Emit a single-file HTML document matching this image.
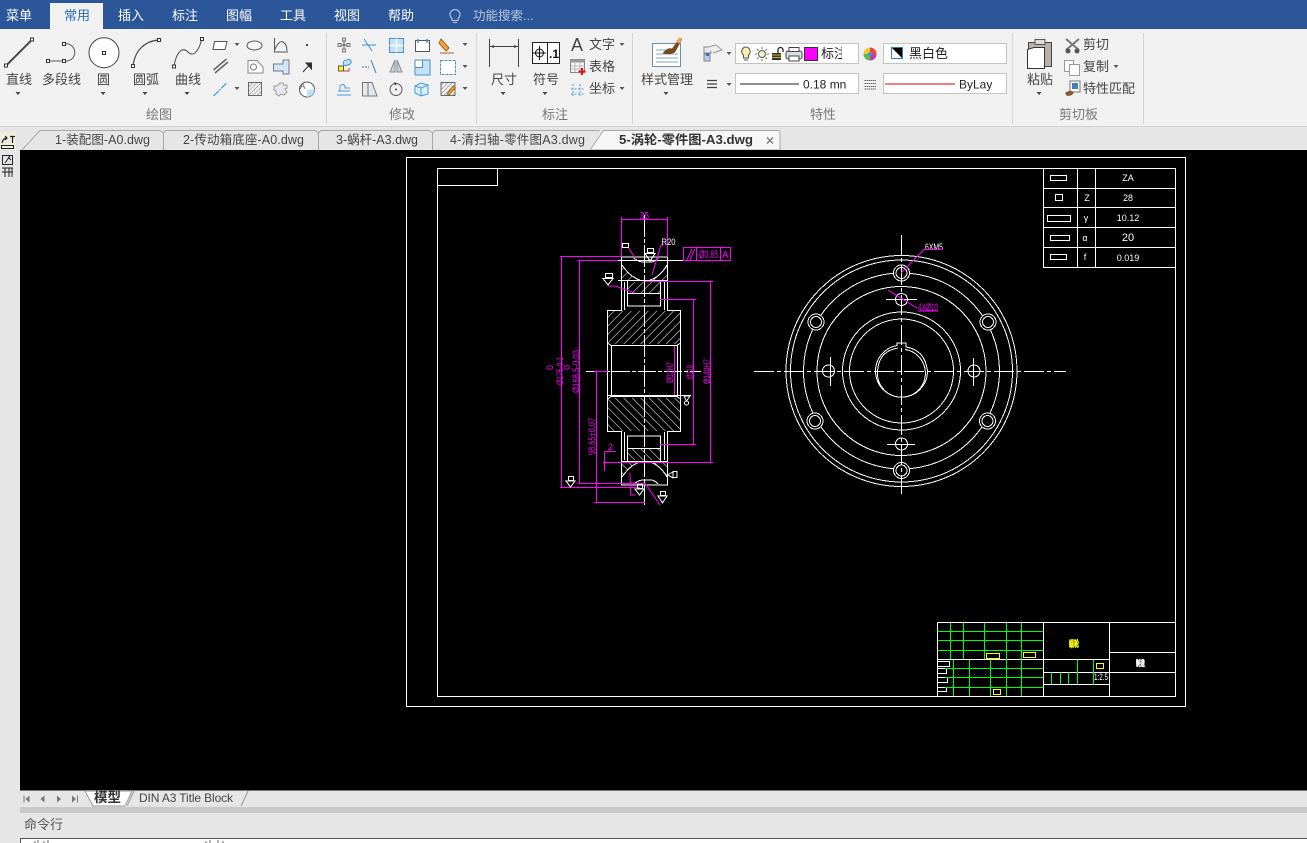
<!DOCTYPE html>
<html lang="zh"><head><meta charset="utf-8"><title>CAD</title>
<style>
html,body{margin:0;padding:0;background:#e6e6e6;width:1307px;height:843px;overflow:hidden}
svg{display:block;font-family:"Liberation Sans","Noto Sans CJK SC",sans-serif}
.m{font-size:13px;fill:#fff}
.l{font-size:13px;fill:#444}
.g{font-size:13px;fill:#777}
.tb{font-size:12.5px;fill:#444}
.i{fill:none;stroke:#555;stroke-width:1}
.b{fill:none;stroke:#4a9bd8;stroke-width:1}
.w{fill:none;stroke:#fff;stroke-width:1}
.p{fill:none;stroke:#f0f;stroke-width:1}
.gr{stroke:#0f0;stroke-width:1}
.y{fill:none;stroke:#ff0;stroke-width:1}
.cad{font-size:9px;fill:#fff}
.mg{font-size:9px;fill:#f0f}
</style></head><body>
<svg width="1307" height="843" viewBox="0 0 1307 843" xmlns="http://www.w3.org/2000/svg">
<defs>
<pattern id="h" width="6" height="6" patternUnits="userSpaceOnUse" patternTransform="rotate(45)"><path d="M0 0V6" stroke="#fff" stroke-width="1.1"/></pattern>
<pattern id="h2" width="3" height="3" patternUnits="userSpaceOnUse" patternTransform="rotate(45)"><path d="M0 0V3" stroke="#777" stroke-width="1"/></pattern>
<g id="half" class="w" shape-rendering="crispEdges">
<path d="M607.5 343V310.5H621.5V257H667.5V310.5H680.5V343L677 345.5H611L607.5 343"/>
<path d="M607.5 343V371M611.5 345V371M677.5 345V371M680.5 343V371"/>
<path d="M627.5 281V306H660.5V281M624.5 282V310M664.5 282V310M627.5 293.5H660.5M621.5 280.5H667.5"/>
<path d="M634 258Q638 262 644 262H650Q655 262 658 258"/>
<path d="M622 265Q630 277 640 280M667 265Q660 277 650 280"/>
</g>
<g id="half2">
<rect x="608" y="311" width="72" height="33" fill="url(#h)"/>
<path d="M622 265Q630 277 640 280H622ZM667 265Q660 277 650 280H667Z" fill="url(#h)"/>
<rect x="628" y="282" width="32" height="11" fill="url(#h)"/>
</g>
</defs>

<!-- backgrounds -->
<rect width="1307" height="843" fill="#e6e6e6"/>
<rect x="0" y="29" width="1307" height="98" fill="#f1f1f1"/>
<rect x="0" y="126" width="1307" height="1" fill="#d2d2d2"/>
<rect x="0" y="0" width="1307" height="29" fill="#2b579a"/>
<rect x="50" y="3" width="53" height="27" fill="#f1f1f1"/>

<!-- menu -->
<text class="m" x="6" y="20">菜单</text>
<text x="64" y="20" font-size="13" fill="#2b6cb5">常用</text>
<text class="m" x="118" y="20">插入</text>
<text class="m" x="172" y="20">标注</text>
<text class="m" x="226" y="20">图幅</text>
<text class="m" x="280" y="20">工具</text>
<text class="m" x="334" y="20">视图</text>
<text class="m" x="388" y="20">帮助</text>
<path d="M452 18.5a5 5 0 1 1 6 0v2h-6zM453 22.5h4" fill="none" stroke="#c5d0e2"/>
<text x="473" y="20" font-size="12.5" fill="#b9c6dc">功能搜索...</text>

<!-- separators -->
<g stroke="#d4d4d4" shape-rendering="crispEdges"><path d="M326.5 33V124M476.5 33V124M632.5 33V124M1012.5 33V124M1143.5 33V124"/></g>

<!-- draw group large icons -->
<path d="M6 65.7L32 39.7" stroke="#4a4a4a" stroke-width="2"/>
<g fill="#fff" stroke="#333" shape-rendering="crispEdges">
<rect x="4.5" y="64" width="3" height="3"/><rect x="30.5" y="38" width="3" height="3"/>
</g>
<path d="M48 61H64M64 43.7h3a8.7 8.7 0 0 1 0 17.3h-3" class="i"/>
<g fill="#fff" stroke="#333" shape-rendering="crispEdges">
<rect x="46.5" y="59.5" width="3" height="3"/><rect x="62.5" y="59.5" width="3" height="3"/><rect x="62.5" y="42.5" width="3" height="3"/>
</g>
<circle cx="104" cy="52.7" r="15" fill="#fff" stroke="#444"/>
<rect x="102.5" y="51.5" width="3" height="3" fill="#fff" stroke="#333" shape-rendering="crispEdges"/>
<path d="M133 66C135 50 145 41 159 40" fill="none" stroke="#444" stroke-width="1.2"/>
<g fill="#fff" stroke="#333" shape-rendering="crispEdges"><rect x="131.5" y="64.5" width="3" height="3"/><rect x="157.5" y="38.5" width="3" height="3"/></g>
<path d="M174 66C177 50 183 47 188 52S198 53 202 39" fill="none" stroke="#555" stroke-width="1.1"/>
<g fill="#fff" stroke="#333" shape-rendering="crispEdges"><rect x="172.5" y="65" width="3" height="3"/><rect x="200.5" y="37.5" width="3" height="3"/></g>

<text class="l" x="6" y="84">直线</text>
<text class="l" x="42" y="84">多段线</text>
<text class="l" x="97" y="84">圆</text>
<text class="l" x="133" y="84">圆弧</text>
<text class="l" x="175" y="84">曲线</text>
<g fill="#444">
<path d="M15.5 92h5l-2.500 3zM100.500 92h5l-2.500 3zM142.500 92h5l-2.500 3zM184.500 92h5l-2.500 3zM500.500 92h5l-2.500 3zM542.500 92h5l-2.500 3zM663.500 92h5l-2.500 3zM1036.500 92h5l-2.500 3z"/>
<path d="M234.500 43h5l-2.500 3zM234.500 87h5l-2.500 3zM462.500 43h5l-2.500 3zM462.500 65h5l-2.500 3zM462.500 87h5l-2.500 3zM619.500 43h5l-2.500 3zM619.500 87h5l-2.500 3zM726.500 52h5l-2.500 3zM726.500 83h5l-2.500 3zM849.500 52h5l-2.500 3zM849.500 83h5l-2.500 3zM996.500 52h5l-2.500 3zM996.500 83h5l-2.500 3zM1113.500 65h5l-2.500 3z" fill="#555"/>
</g>
<text class="g" x="146" y="119">绘图</text>
<text class="g" x="389" y="119">修改</text>
<text class="g" x="542" y="119">标注</text>
<text class="g" x="810" y="119">特性</text>
<text class="g" x="1059" y="119">剪切板</text>

<!-- draw small icons -->
<path d="M214.500 41.500H227L225 49.500H213Z" fill="#fff" stroke="#555"/>
<ellipse cx="254.500" cy="45.500" rx="7.500" ry="4.500" fill="#f4f4f4" stroke="#555"/>
<path d="M274.500 38V52H288M274.500 50Q279 40 283 42T287 51" class="i"/>
<rect x="306" y="44" width="2" height="2" fill="#444"/>
<path d="M213.500 70L226.500 59M215 73L228 62" fill="none" stroke="#666" stroke-width="1.500"/>
<path d="M248 60.500H257L263 67V73H248Z" fill="#fff" stroke="#888"/><circle cx="253.500" cy="67" r="3" fill="none" stroke="#777"/>
<path d="M273.500 64H283V60H289V74H283V71H273.500Z" fill="#d3e6f5" stroke="#778"/>
<path d="M303 72L311 63M306 63H311.500V69Z" fill="#222" stroke="#333"/>
<path d="M213.500 96L227 82.500" stroke="#3aa0e0" stroke-width="1.200" stroke-dasharray="7 1 2 1"/>
<rect x="248.500" y="82.500" width="13" height="13" fill="url(#h2)" stroke="#666"/>
<path d="M280 83l3 0 1 2 3 0 0 3-2 1 2 3-3 3-3-1-2 2-3-2 0-3-2-1 0-4 3 0z" fill="#e6e8ee" stroke="#999"/>
<circle cx="307" cy="89.500" r="7.500" fill="#fff" stroke="#555"/><path d="M307 89.500H314.500A7.500 7.500 0 0 1 307 97Z" fill="#bfe0f7"/>
<text x="300" y="89" font-size="8" fill="#555">A</text>

<!-- modify icons -->
<g class="i">
<path d="M344 39V51M338 45H350"/>
<path d="M362 45H376M364 39L372 51" stroke="#3a8fd0"/>
</g>
<g fill="#e4e4e4" stroke="#777"><rect x="342.500" y="38" width="3" height="3"/><rect x="342.500" y="49" width="3" height="3"/><rect x="338" y="43.500" width="3" height="3"/><rect x="347" y="43.500" width="3" height="3"/></g>
<rect x="389.500" y="38.500" width="14" height="14" fill="#c3e1f7" stroke="#4a8fc8"/><path d="M396.500 38.500V52.500M389.500 45.500H403.500" stroke="#fff" stroke-width="1.500"/>
<rect x="415.500" y="40.500" width="14" height="11" fill="#fff" stroke="#555"/><path d="M418 39v4M427 39v4" stroke="#3a8fd0" stroke-width="1.500"/>
<path d="M441 39l8 9-3 3-7-8zM440 53h14" fill="#f3a83c" stroke="#a0622a"/>
<rect x="338.500" y="66" width="5" height="5" fill="#ff0" stroke="#555"/><rect x="343" y="60" width="8" height="5" rx="2" fill="#bfe0f7" stroke="#4a8fc8" transform="rotate(-20 347 62)"/><path d="M344 71h5v-3" stroke="#c33" fill="none"/>
<path d="M362 67H369" stroke="#3a6fa0" stroke-dasharray="2 1"/><path d="M371 60L376 73" stroke="#2a7fc0"/>
<path d="M395 60L390 72H395ZM397 60L402 72H397Z" fill="#ccd5dd" stroke="#889"/>
<rect x="415" y="60" width="15" height="15" fill="#c3e1f7" stroke="#4a8fc8"/><rect x="415" y="60" width="7.500" height="7.500" fill="#fff" stroke="#4a8fc8"/>
<rect x="440.500" y="60.500" width="15" height="14" fill="#fff" stroke="#4a8fc8" stroke-dasharray="3 1"/>
<path d="M337 95H351M338 91H350M340 91V86Q343 83 345 86V88H350" class="b"/>
<path d="M362.500 82.500H372L377 96H362.500Z" fill="#dbeaf6" stroke="#777"/><path d="M362.500 82.500H368V96H362.500Z" fill="#e8e8e8" stroke="#777"/>
<circle cx="396" cy="89.500" r="6" class="i" stroke-width="1.500"/><circle cx="396" cy="89.500" r="1" fill="#444"/><path d="M394 82l3 1.500-2 2z" fill="#333"/>
<path d="M415 86L421 83L428 85V94L421 96L415 93Z" fill="#d8ecfa" stroke="#4a9bd8"/><path d="M421 88V96M415 86L421 88L428 85" class="b"/>
<rect x="441" y="82.500" width="14" height="13" fill="url(#h2)" stroke="#666"/><path d="M447 94l6-8 2 2-6 7z" fill="#f3a83c" stroke="#a0622a"/>

<!-- annotation -->
<path d="M489.500 39V67M518.500 39V67M489.500 46.500H518.500" stroke="#444" fill="none"/>
<path d="M490 46.500l4-1.500v3zM518 46.500l-4-1.500v3z" fill="#444"/>
<rect x="532.500" y="42.500" width="27" height="21" fill="#fff" stroke="#222"/><path d="M547.500 42.500V63.500" stroke="#222"/>
<circle cx="539.500" cy="53" r="4" fill="none" stroke="#111"/><path d="M533 53H546M539.500 46V60" stroke="#111"/>
<text x="549" y="58" font-size="12" font-weight="bold" fill="#111">.1</text>
<text class="l" x="491" y="84">尺寸</text>
<text class="l" x="533" y="84">符号</text>
<text x="571" y="51" font-size="18" fill="#444">A</text>
<text class="l" x="589" y="49">文字</text>
<rect x="570.500" y="59.500" width="14" height="13" fill="#f4f4f4" stroke="#888"/><rect x="570.500" y="59.500" width="14" height="3" fill="#999"/><path d="M575 63V72M580 63V72M571 66H584M571 69H584" stroke="#bbb"/>
<path d="M582 68v7M578.500 71.500h7" stroke="#d11" stroke-width="2"/>
<text class="l" x="589" y="71">表格</text>
<path d="M573 84V96M580 84V96M571 89H585M571 94H585" stroke="#4a9bd8" stroke-dasharray="2 1.500" fill="none"/>
<text class="l" x="589" y="93">坐标</text>

<!-- style -->
<rect x="652.500" y="43.500" width="28" height="23" fill="#fff" stroke="#6f8fae"/>
<path d="M656 50h10M656 54h22M656 58h22M656 62h22" stroke="#86a3bf"/>
<path d="M663 53Q668 47 672 49L680 38L682 39L675 52Q670 55 663 53Z" fill="#7a4a1c" stroke="#5a3510" stroke-width=".5"/>
<path d="M676 41L680 37L682 39L679 44Z" fill="#e8a860"/>
<text class="l" x="641" y="84">样式管理</text>

<!-- properties -->
<rect x="704" y="47" width="7" height="6" fill="#e4e8ee" stroke="#889"/><rect x="704" y="54" width="6" height="7" fill="#bcd" stroke="#789"/><path d="M708 47L716 45L722 50L713 53" fill="#eee" stroke="#999"/><rect x="706" y="53" width="3" height="3" fill="#3a70c0"/>
<path d="M707 80.500H717M707 84H717M707 87.500H717" stroke="#444" stroke-width="1.200"/>
<g fill="#fff" stroke="#c4c4c4" shape-rendering="crispEdges">
<rect x="735.500" y="43.500" width="123" height="20"/>
<rect x="735.500" y="73.500" width="123" height="20"/>
<rect x="883.500" y="43.500" width="123" height="20"/>
<rect x="883.500" y="73.500" width="123" height="20"/>
</g>
<path d="M745.500 47a4.500 4.500 0 0 1 3 8v3h-5v-3a4.500 4.500 0 0 1 2-8z" fill="#f8ecb0" stroke="#555"/><path d="M744 60h4" stroke="#555"/>
<circle cx="762" cy="54" r="3.500" fill="#f8f0c8" stroke="#555"/><path d="M762 47v2M762 59v2M755 54h2M767 54h2M757 49l1.500 1.500M767 49l-1.500 1.500M757 59l1.500-1.500M767 59l-1.500-1.500" stroke="#666"/>
<rect x="772" y="53" width="9" height="7" fill="#333"/><path d="M772 55h9M772 57.500h9" stroke="#c9a92e"/><path d="M778 53v-3a2.500 2.500 0 0 1 5 0v2" fill="none" stroke="#222" stroke-width="1.300"/>
<rect x="786" y="51" width="16" height="8" rx="2" fill="#d9dfe6" stroke="#444"/><rect x="789" y="47.500" width="10" height="4" fill="#fff" stroke="#444"/><rect x="789" y="56" width="10" height="5" fill="#fff" stroke="#444"/>
<rect x="804.500" y="47.500" width="13" height="13" fill="#f0f" stroke="#333"/>
<svg x="821" y="44" width="21" height="19"><text x="0" y="14" font-size="13" fill="#222">标注</text></svg>
<path d="M740 84H799" stroke="#222"/>
<text x="803" y="88.500" font-size="12" fill="#222">0.18 mn</text>
<circle cx="870" cy="54" r="6.500" fill="#f6c532"/><path d="M870 54V47.500A6.500 6.500 0 0 1 876.500 54Z" fill="#e54a3c"/><path d="M870 54H876.500A6.500 6.500 0 0 1 870 60.500Z" fill="#c03aa8"/><path d="M870 54V60.500A6.500 6.500 0 0 1 863.500 54Z" fill="#4fc04f"/><circle cx="870" cy="54" r="2" fill="#4a90d8"/>
<path d="M864.500 80.500H876M864.500 83.500H876M864.500 86.500H876M864.500 89H876" stroke="#666" stroke-dasharray="1.500 .5"/>
<rect x="891.500" y="47.500" width="11" height="11" fill="#fff" stroke="#2a7fc0"/><path d="M892 48H902V58Z" fill="#000"/>
<text x="909" y="58" font-size="13" fill="#222">黑白色</text>
<path d="M885 84H955" stroke="#d00"/>
<svg x="959" y="74" width="33" height="19"><text x="0" y="14.500" font-size="12" fill="#222">ByLayer</text></svg>

<!-- clipboard -->
<rect x="1028.500" y="42.500" width="23" height="24" fill="#b8b2a8" stroke="#444"/><rect x="1035" y="39.500" width="10" height="5" fill="#ddd" stroke="#555"/>
<path d="M1027.500 49.500L1034 47.500H1044.500V68.500H1027.500Z" fill="#fff" stroke="#333"/>
<text class="l" x="1027" y="84">粘贴</text>
<path d="M1066 39L1079 50M1079 39L1066 50" stroke="#777" stroke-width="2"/><circle cx="1068" cy="51" r="2.500" fill="#555"/><circle cx="1077" cy="51" r="2.500" fill="#555"/>
<text class="l" x="1083" y="49">剪切</text>
<rect x="1064.500" y="60.500" width="9" height="11" fill="#fff" stroke="#999"/><rect x="1069.500" y="64.500" width="10" height="11" fill="#fff" stroke="#999"/>
<text class="l" x="1083" y="71">复制</text>
<rect x="1070" y="81" width="10" height="11" fill="#fff" stroke="#777"/><rect x="1072" y="83" width="6" height="6" fill="#3f7fc0"/><path d="M1065 93Q1070 89 1074 92Q1073 96 1067 96Z" fill="#8a5a30"/>
<text class="l" x="1083" y="93">特性匹配</text>

<!-- doc tabs -->
<g fill="none" stroke="#a8a8a8"><path d="M22 150L40 130.500H160L163.500 133V150"/><path d="M163.500 133L166 130.500H315L318.500 133V150"/><path d="M318.500 133L321 130.500H429L432.500 133V150"/><path d="M432.500 133L435 130.500H600"/></g>
<path d="M590 150L603.500 130.500H777Q780 130.500 780 133V150Z" fill="#f6f6f6" stroke="#a8a8a8"/>
<text class="tb" x="55" y="144" textLength="95">1-装配图-A0.dwg</text>
<text class="tb" x="183" y="144" textLength="121">2-传动箱底座-A0.dwg</text>
<text class="tb" x="336" y="144" textLength="82">3-蜗杆-A3.dwg</text>
<text class="tb" x="450" y="144" textLength="135">4-清扫轴-零件图A3.dwg</text>
<text class="tb" x="619" y="144" textLength="134" lengthAdjust="spacingAndGlyphs" font-weight="bold" style="fill:#333">5-涡轮-零件图-A3.dwg</text>
<path d="M767 137.500l6 6M773 137.500l-6 6" stroke="#777" stroke-width="1.300"/>

<!-- left strip icons -->
<rect x="0" y="132" width="16" height="18" fill="#eeeedd"/>
<g fill="none" stroke="#222">
<path d="M2 143Q3 138 7 138M5 136l2 2-2 2M10 136.500h5M12.500 136.500V143" stroke-width="1.200"/>
<rect x="1.500" y="145.500" width="12" height="3"/>
<rect x="2.500" y="155.500" width="10" height="9"/><path d="M5 163l5-7M8 157l3 3"/>
<path d="M2 168h11M5 168v9M9 168v9M12 168v9M2 172h11"/>
</g>

<!-- canvas -->
<rect x="20" y="150" width="1287" height="640" fill="#000"/>
<g class="w" shape-rendering="crispEdges">
<rect x="406.500" y="157.500" width="779" height="549"/>
<rect x="437.500" y="168.500" width="738" height="528"/>
<rect x="437.500" y="168.500" width="60" height="17"/>
<!-- upper right table -->
<rect x="1043.500" y="168.500" width="132" height="99"/>
<path d="M1043.500 188.500H1175.500M1043.500 207.500H1175.500M1043.500 227.500H1175.500M1043.500 247.500H1175.500M1077.500 168.500V267.500M1095.500 168.500V267.500"/>
<rect x="1050.500" y="175.500" width="16" height="5"/>
<rect x="1055.500" y="194.500" width="7" height="6"/>
<rect x="1047.500" y="215.500" width="23" height="6"/>
<rect x="1050.500" y="235.500" width="19" height="5"/>
<rect x="1050.500" y="254.500" width="16" height="5"/>
<!-- title block -->
<path d="M937.500 622.500H1175.500M937.500 622.500V696.500M1043.500 622.500V696.500M1109.500 622.500V696.500M937.500 659.500H1109.500M1109.500 652.500H1175.500M1043.500 672.500H1175.500M1043.500 684.500H1109.500"/>
<path d="M937.500 661.500H949.500V666.500H937.500M937.500 668.500H946.500V673.500H937.500M937.500 677.500H947.500V682.500H937.500M937.500 687.500H946.500V691.500H937.500"/>
</g>
<g class="gr" shape-rendering="crispEdges" fill="none">
<path d="M937.500 631.500H1043.500M937.500 640.500H1043.500M937.500 650.500H1043.500M945 668.500H1043.500M945 677.500H1043.500M945 687.500H1043.500"/>
<path d="M950.500 622.500V659M963.500 622.500V659M984.500 622.500V659M1006.500 622.500V696M1021.500 622.500V696M953.500 659.500V696M969.500 659.500V696M990.500 659.500V696"/>
<path d="M1051.500 672.500V684M1060.500 672.500V684M1068.500 672.500V684M1077.500 659.500V684M1093.500 659.500V685"/>
</g>
<g class="y" shape-rendering="crispEdges">
<rect x="986.500" y="653.500" width="13" height="5"/><rect x="1023.500" y="652.500" width="12" height="5"/><rect x="993.500" y="689.500" width="7" height="5"/><rect x="1096.500" y="663.500" width="7" height="5"/>
</g>
<text transform="translate(1069 647) scale(.55 1)" font-size="9" font-weight="bold" fill="#ff0" stroke="#ff0" stroke-width=".5">蜗轮</text>
<text transform="translate(1136 666) scale(.55 1)" font-size="8" font-weight="bold" fill="#fff" stroke="#fff" stroke-width=".5">制造</text>
<text x="1094" y="680" font-size="9" fill="#fff" textLength="14" lengthAdjust="spacingAndGlyphs">1:2.5</text>
<g class="cad" text-anchor="middle">
<text x="1128" y="181">ZA</text><text x="1128" y="201">28</text><text x="1128" y="221">10.12</text><text x="1128" y="241" font-size="11">20</text><text x="1128" y="261">0.019</text>
<text x="1087" y="201">Z</text><text x="1086" y="221">γ</text><text x="1085" y="241">α</text><text x="1085" y="260">f</text>
</g>

<!-- right view -->
<g class="w" shape-rendering="crispEdges">
<circle cx="901.500" cy="371" r="115.500"/><circle cx="901.500" cy="371" r="111"/><circle cx="901.500" cy="371" r="98"/><circle cx="901.500" cy="371" r="84.500"/><circle cx="901.500" cy="371" r="59"/><circle cx="901.500" cy="371" r="52"/>
<path d="M897 345.500V343H906V347Q925 350 927.500 371A26 26 0 1 1 897 345.500Z"/>
<path d="M898 348Q879 351 877.500 371A24 24 0 1 0 905 349.500"/>
<circle cx="901.500" cy="273" r="8" fill="#000"/><circle cx="901.500" cy="273" r="5.500"/>
<circle cx="816" cy="322" r="8" fill="#000"/><circle cx="816" cy="322" r="5.500"/>
<circle cx="988" cy="322" r="8" fill="#000"/><circle cx="988" cy="322" r="5.500"/>
<circle cx="815" cy="421" r="8" fill="#000"/><circle cx="815" cy="421" r="5.500"/>
<circle cx="987.500" cy="421" r="8" fill="#000"/><circle cx="987.500" cy="421" r="5.500"/>
<circle cx="901.500" cy="470.500" r="8" fill="#000"/><circle cx="901.500" cy="470.500" r="5.500"/>
<circle cx="901.500" cy="299.500" r="6" fill="#000"/><circle cx="828.500" cy="371" r="6" fill="#000"/><circle cx="974" cy="371" r="6" fill="#000"/><circle cx="901.500" cy="444" r="6" fill="#000"/>
</g>
<g class="w" shape-rendering="crispEdges">
<path d="M754 371.500H1066" stroke-dasharray="20 3 4 3"/>
<path d="M901.500 235V494" stroke-dasharray="20 3 4 3"/>
<path d="M886 299.500H917M887 444.500H915M830.500 357V386M973.500 358V386"/>
</g>
<text x="925" y="250" font-size="9" fill="#fff" textLength="18" lengthAdjust="spacingAndGlyphs">6XM5</text>
<path d="M901 273L924 249.500H942" class="p"/>
<path d="M888 290L917 308" class="p"/>
<text x="918" y="310.500" font-size="10" fill="#f0f" textLength="20" lengthAdjust="spacingAndGlyphs">4XØ10</text>
<path d="M918 311H938" class="p"/>

<!-- left view -->
<use href="#half2"/><use href="#half2" transform="translate(0 742) scale(1 -1)"/>
<use href="#half"/><use href="#half" transform="translate(0 742) scale(1 -1)"/>
<g class="w" shape-rendering="crispEdges">
<path d="M644.500 215V505" stroke-dasharray="22 2 4 2"/>
<path d="M586 371.500H701" stroke-dasharray="18 2 4 2"/>
<path d="M618 260.500H683M618 280.500H643"/>
<path d="M607 395.500H691"/>
</g>
<!-- magenta dims -->
<g class="p" shape-rendering="crispEdges">
<path d="M621.500 217V256M667.500 217V256M621.500 219.500H667.500"/>
<path d="M560 256.500H621M561.500 256.500V487.500M560 487.500H640"/>
<path d="M577.500 260.500H618M579.500 260.500V483.500M577.500 483.500H645"/>
<path d="M594 371.500H608M596.500 371.500V502.500M594 502.500H645"/>
<path d="M645 281.500H713M710.500 281.500V462.500M603 462.500H713"/>
<path d="M660 299.500H696M693.500 299.500V444.500M660 444.500H696"/>
<path d="M674.500 346V395"/>
<path d="M604.500 452V471M604.500 451.500H616"/>
<rect x="683.500" y="247.500" width="47" height="13"/>
<path d="M696.500 247.500V260.500M720.500 247.500V260.500"/>
</g>
<path d="M687 260L692 249M690 260L695 249" class="p"/>
<path d="M652 275L661 245H664" class="p"/>
<path d="M628.700 248L635 258" class="p"/>
<path d="M608 286H615L635 293" class="p"/>
<path d="M630 473L630.700 495H635M660 505L645 483" class="p"/>
<text x="661.500" y="245" font-size="9.500" fill="#fff" textLength="14" lengthAdjust="spacingAndGlyphs">R20</text>
<text x="640" y="219" font-size="10" fill="#f0f" textLength="9" lengthAdjust="spacingAndGlyphs">35</text>
<text x="699" y="258" font-size="11" fill="#f0f" textLength="19" lengthAdjust="spacingAndGlyphs">Ø0.65</text>
<text x="722" y="258" font-size="10" fill="#f0f">A</text>
<text x="608" y="450" font-size="9" fill="#f0f">2</text>
<g class="mg">
<text transform="translate(563 385) rotate(-90)" textLength="28" lengthAdjust="spacingAndGlyphs">Ø175-0.1</text>
<text transform="translate(553 370) rotate(-90)">0</text>
<text transform="translate(570 370) rotate(-90)">0</text>
<text transform="translate(579 393) rotate(-90)" textLength="43" lengthAdjust="spacingAndGlyphs">Ø168.5-0.03</text>
<text transform="translate(595 455) rotate(-90)" textLength="37" lengthAdjust="spacingAndGlyphs">98.65±0.07</text>
<text transform="translate(673 383) rotate(-90)" textLength="21" lengthAdjust="spacingAndGlyphs">Ø32H7</text>
<text transform="translate(693 379) rotate(-90)" textLength="14" lengthAdjust="spacingAndGlyphs">Ø110</text>
<text transform="translate(710 384) rotate(-90)" textLength="25" lengthAdjust="spacingAndGlyphs">Ø140H7</text>
</g>
<!-- roughness symbols -->
<g fill="none" stroke="#fff" shape-rendering="crispEdges">
<rect x="622.500" y="243.500" width="6" height="4"/>
<rect x="647.500" y="248.500" width="6" height="4"/><path d="M645 253.500H655L650 261Z"/>
<rect x="605.500" y="273.500" width="7" height="4"/><path d="M603 278.500H613L608 285Z"/>
<rect x="568.500" y="476.500" width="5" height="4"/><path d="M566 481H575L570.500 487Z"/>
<rect x="637.500" y="484.500" width="5" height="4"/><path d="M635 489H644L639.500 495Z"/>
<rect x="660.500" y="491.500" width="5" height="4"/><path d="M658 496H667L662.500 503Z"/>
<rect x="673" y="471.500" width="4" height="6"/><path d="M668 474.500L673 472V478L668 475"/>
<circle cx="686.500" cy="403" r="2"/><path d="M684 396H690L686.500 401Z"/>
</g>

<!-- layout tabs -->
<rect x="20" y="790" width="1287" height="1" fill="#777"/>
<rect x="20" y="807" width="1287" height="6" fill="#c9c9c9"/>
<g fill="#777">
<path d="M23.500 795.500h1v7h-1zM29.500 795.500v7l-4-3.500zM44.500 795.500v7l-4-3.500zM57 795.500v7l4-3.500zM72 795.500v7l4-3.500zM77 795.500h1v7h-1z"/>
</g>
<path d="M85 791L93 806H125L132 791Z" fill="#fff" stroke="#999"/>
<path d="M127 806L134 791" stroke="#999"/>
<path d="M241 806L248 791" stroke="#999"/>
<path d="M125 806H241" stroke="#ddd"/>
<text x="94" y="802" font-size="13.500" font-weight="bold" fill="#333">模型</text>
<text x="139" y="802" font-size="12" fill="#444" textLength="94">DIN A3 Title Block</text>
<text x="24" y="829" font-size="13" fill="#555">命令行</text>

<!-- command box -->
<rect x="20.500" y="838.500" width="1290" height="8" fill="#fff" stroke="#555"/>
<path d="M35 841V843M38 840V843M44 841V843M48 840V843M206 841V843M210 840V843M218 840V843M223 841V843" stroke="#666"/>
</svg>
</body></html>
